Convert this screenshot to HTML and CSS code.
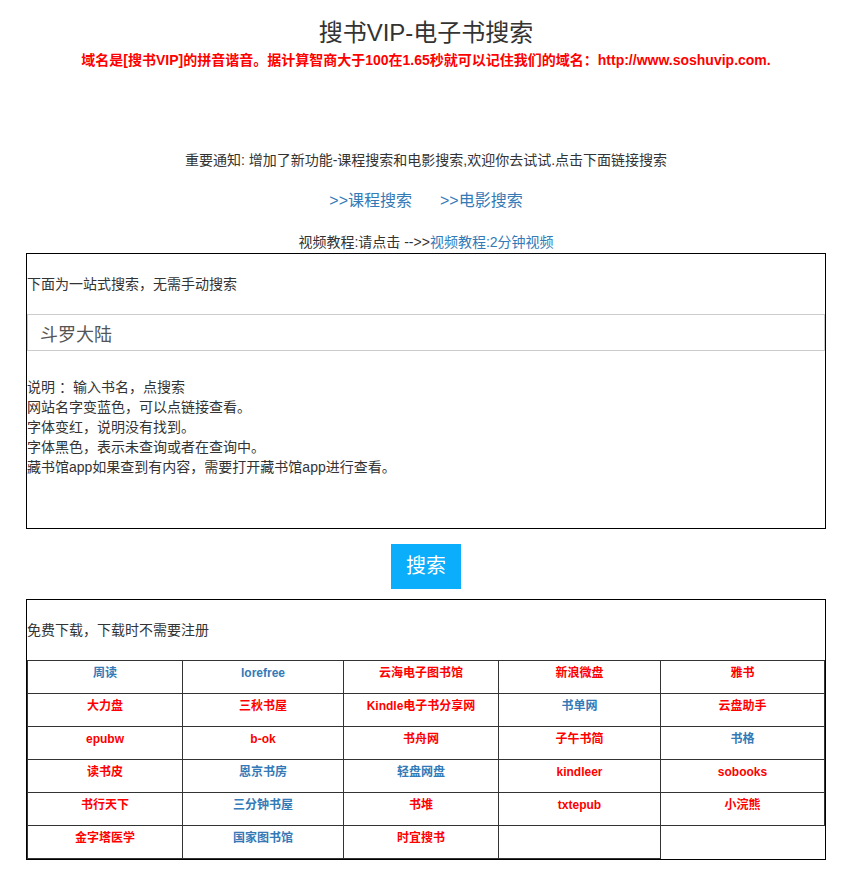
FILE: index.html
```html
<!DOCTYPE html>
<html lang="zh-CN">
<head>
<meta charset="utf-8">
<title>搜书VIP-电子书搜索</title>
<link rel="stylesheet" href="styles.css">
</head>
<body>
<div class="page">
  <h1 class="title">搜书VIP-电子书搜索</h1>
  <p class="domain">域名是[搜书VIP]的拼音谐音。据计算智商大于100在1.65秒就可以记住我们的域名：http://www.soshuvip.com.</p>

  <p class="notice">重要通知: 增加了新功能-课程搜索和电影搜索,欢迎你去试试.点击下面链接搜索</p>
  <p class="quick-links"><a href="#">&gt;&gt;课程搜索</a><a href="#">&gt;&gt;电影搜索</a></p>
  <p class="video">视频教程:请点击 --&gt;&gt;<a href="#">视频教程:2分钟视频</a></p>

  <div class="box search-box">
    <p class="box-caption">下面为一站式搜索，无需手动搜索</p>
    <input class="search-input" type="text" value="斗罗大陆">
    <div class="help">
      <p>说明 ：输入书名，点搜索</p>
      <p>网站名字变蓝色，可以点链接查看。</p>
      <p>字体变红，说明没有找到。</p>
      <p>字体黑色，表示未查询或者在查询中。</p>
      <p>藏书馆app如果查到有内容，需要打开藏书馆app进行查看。</p>
    </div>
  </div>

  <div class="btn-row"><button class="search-btn" type="button">搜索</button></div>

  <div class="box result-box">
    <p class="box-caption">免费下载，下载时不需要注册</p>
    <table class="sites">
      <colgroup>
        <col class="c1"><col class="c2"><col class="c3"><col class="c4"><col class="c5">
      </colgroup>
      <tr>
        <td><a class="ok" href="#">周读</a></td>
        <td><a class="ok" href="#">lorefree</a></td>
        <td><a class="no" href="#">云海电子图书馆</a></td>
        <td><a class="no" href="#">新浪微盘</a></td>
        <td><a class="no" href="#">雅书</a></td>
      </tr>
      <tr>
        <td><a class="no" href="#">大力盘</a></td>
        <td><a class="no" href="#">三秋书屋</a></td>
        <td><a class="no" href="#">Kindle电子书分享网</a></td>
        <td><a class="ok" href="#">书单网</a></td>
        <td><a class="no" href="#">云盘助手</a></td>
      </tr>
      <tr>
        <td><a class="no" href="#">epubw</a></td>
        <td><a class="no" href="#">b-ok</a></td>
        <td><a class="no" href="#">书舟网</a></td>
        <td><a class="no" href="#">子午书简</a></td>
        <td><a class="ok" href="#">书格</a></td>
      </tr>
      <tr>
        <td><a class="no" href="#">读书皮</a></td>
        <td><a class="ok" href="#">恩京书房</a></td>
        <td><a class="ok" href="#">轻盘网盘</a></td>
        <td><a class="no" href="#">kindleer</a></td>
        <td><a class="no" href="#">sobooks</a></td>
      </tr>
      <tr>
        <td><a class="no" href="#">书行天下</a></td>
        <td><a class="ok" href="#">三分钟书屋</a></td>
        <td><a class="no" href="#">书堆</a></td>
        <td><a class="no" href="#">txtepub</a></td>
        <td><a class="no" href="#">小浣熊</a></td>
      </tr>
      <tr>
        <td><a class="no" href="#">金字塔医学</a></td>
        <td><a class="ok" href="#">国家图书馆</a></td>
        <td><a class="no" href="#">时宜搜书</a></td>
        <td></td>
      </tr>
    </table>
  </div>
</div>
</body>
</html>
```

FILE: styles.css
```css
html, body {
  margin: 0;
  padding: 0;
  background: #fff;
}

body {
  font-family: "Liberation Sans", "Noto Sans CJK SC", sans-serif;
  font-size: 14px;
  line-height: 20px;
  color: #333;
}

a {
  color: #337ab7;
  text-decoration: none;
}

p {
  margin: 0;
}

.page {
  width: 800px;
  margin: 0 0 0 26px;
}

.title {
  margin: 20px 0 0;
  font-size: 24px;
  line-height: 26px;
  font-weight: normal;
  text-align: center;
  color: #333;
}

.domain {
  margin-top: 4px;
  text-align: center;
  color: #ff0000;
  font-weight: bold;
}

.notice {
  margin-top: 80px;
  text-align: center;
}

.quick-links {
  margin-top: 20px;
  font-size: 16px;
  line-height: 22px;
  text-align: center;
  display: flex;
  justify-content: center;
  gap: 28px;
}

.video {
  margin-top: 20px;
  text-align: center;
}

.box {
  border: 1px solid #000;
}

.search-box {
  margin-top: 1px;
  padding: 20px 0 51px;
}

.box-caption {
  line-height: 20px;
}

.search-input {
  display: block;
  box-sizing: border-box;
  width: 100%;
  height: 37px;
  margin: 20px 0 0;
  padding: 0 12px;
  border: 1px solid #ccc;
  font-family: "Liberation Sans", "Noto Sans CJK SC", sans-serif;
  font-size: 18px;
  color: #555;
  background: #fff;
  outline: none;
}

.help {
  margin-top: 26px;
}

.btn-row {
  display: flex;
  justify-content: center;
  margin-top: 15px;
}

.search-btn {
  width: 70px;
  height: 45px;
  padding: 0;
  border: none;
  background: #0aaefa;
  color: #fff;
  font-family: "Liberation Sans", "Noto Sans CJK SC", sans-serif;
  font-size: 20px;
  line-height: 45px;
  cursor: pointer;
}

.result-box {
  margin-top: 10px;
  padding-top: 20px;
}

.result-box .box-caption {
  margin-bottom: 20px;
}

.sites {
  width: 798px;
  border-collapse: collapse;
  table-layout: fixed;
}

.c1 { width: 155px; }
.c2 { width: 161px; }
.c3 { width: 155px; }
.c4 { width: 162px; }
.c5 { width: 164px; }

.sites td {
  height: 33px;
  padding: 2px 0 0;
  box-sizing: border-box;
  border: 1px solid #333;
  vertical-align: top;
  text-align: center;
  font-size: 12px;
  line-height: 20px;
  font-weight: bold;
}

.sites a.ok {
  color: #337ab7;
}

.sites a.no {
  color: #ff0000;
}
```
